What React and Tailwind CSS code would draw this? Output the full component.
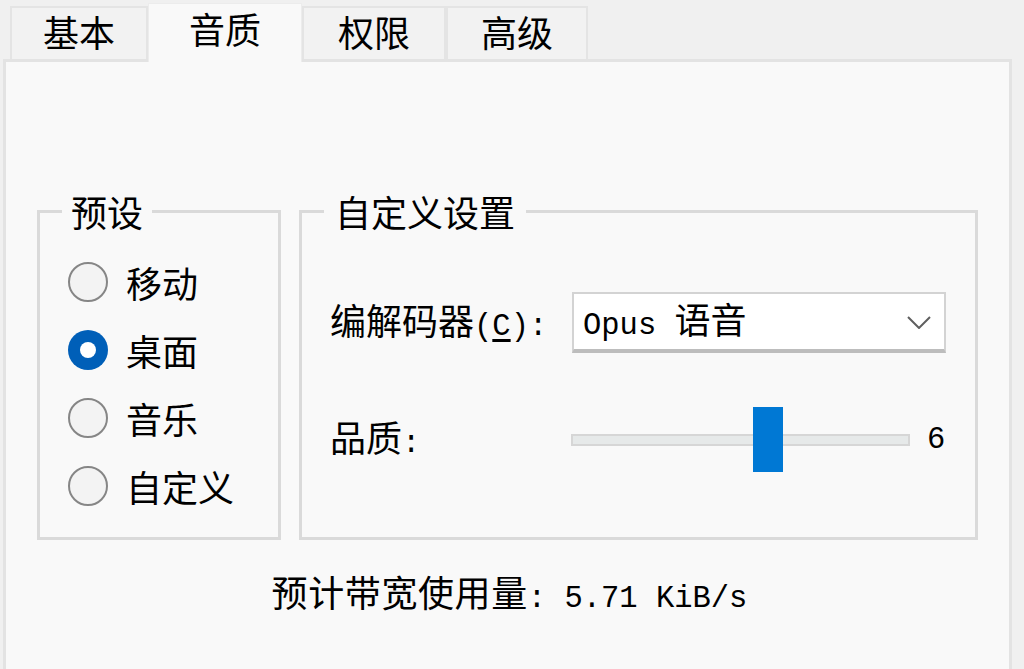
const cjk = "font-['Noto_Sans_CJK_SC',sans-serif]";
const mono = "font-['Liberation_Mono',monospace] text-[30.5px]";

function Tab({ label, selected, className }) {
  if (selected) {
    return (
      <div
        className={`relative z-10 -mb-[3px] flex h-[59px] items-start justify-center border-x border-t border-[#ececec] bg-[#f9f9f9] pt-[5px] ${className}`}
      >
        <span className="leading-[38px]">{label}</span>
      </div>
    );
  }
  return (
    <div
      className={`flex h-[53px] items-start justify-center border-x-2 border-t-2 border-[#e4e4e4] bg-[#f2f2f2] pt-[4px] ${className}`}
    >
      <span className="leading-[38px]">{label}</span>
    </div>
  );
}

function Radio({ label, checked }) {
  return (
    <div className="flex h-[68px] items-center gap-[18px]">
      {checked ? (
        <span className="flex h-[40px] w-[40px] items-center justify-center rounded-full bg-[#005fb8]">
          <span className="h-[16px] w-[16px] rounded-full bg-white" />
        </span>
      ) : (
        <span className="h-[40px] w-[40px] rounded-full border-2 border-[#868686] bg-[#f3f3f3]" />
      )}
      <span className="leading-[40px]">{label}</span>
    </div>
  );
}

export default function App() {
  const presets = [
    { label: "移动", checked: false },
    { label: "桌面", checked: true },
    { label: "音乐", checked: false },
    { label: "自定义", checked: false },
  ];

  return (
    <div className={`h-[669px] w-[1024px] overflow-hidden bg-[#f0f0f0] text-[36px] text-black ${cjk}`}>
      <div className="flex h-[59px] items-end pl-[10px]">
        <Tab label="基本" className="w-[138px]" />
        <Tab label="音质" selected className="w-[154px]" />
        <Tab label="权限" className="w-[144px]" />
        <Tab label="高级" className="w-[142px]" />
      </div>

      <div className="ml-[3px] h-[620px] w-[1009px] border-[3px] border-[#e3e3e3] bg-[#f9f9f9]">
        <div className="mt-[131px] flex gap-[18px] pl-[31px]">
          <fieldset className="h-[347px] w-[244px] border-[3px] border-[#dadada] pl-[28px]">
            <legend className="ml-[-6px] px-[9px] leading-[36px]">预设</legend>
            <div className="flex flex-col pt-[19px]">
              {presets.map((p) => (
                <Radio key={p.label} label={p.label} checked={p.checked} />
              ))}
            </div>
          </fieldset>

          <fieldset className="h-[347px] w-[679px] border-[3px] border-[#dadada] pl-[28px]">
            <legend className="ml-[-6px] px-[11px] leading-[36px]">自定义设置</legend>
            <div className="flex flex-col pt-[63px]">
              <div className="flex items-center">
                <span className="w-[242px] leading-[40px]">
                  编解码器<span className={mono}>
                    (<span className="underline underline-offset-4">C</span>):
                  </span>
                </span>
                <div className="flex h-[61px] w-[374px] items-center justify-between border-2 border-b-[4px] border-[#d3d3d3] border-b-[#bdbdbd] bg-white pl-[9px] pr-[13px]">
                  <span className="leading-[40px]">
                    <span className={mono}>Opus </span>语音
                  </span>
                  <svg width="24" height="13" viewBox="0 0 24 13" className="mt-[2px]">
                    <polyline points="1,1 12,12 23,1" fill="none" stroke="#5f5f5f" strokeWidth="2" />
                  </svg>
                </div>
              </div>

              <div className="mt-[54px] flex items-center">
                <span className="w-[241px] leading-[40px]">
                  品质<span className={mono}>:</span>
                </span>
                <div className="relative flex h-[65px] w-[339px] items-center">
                  <div className="h-[12px] w-full border-2 border-[#d6d6d6] bg-[#e6e9e9]" />
                  <div className="absolute left-[182px] top-0 h-[65px] w-[30px] bg-[#0078d4]" />
                </div>
                <span className={`ml-[17px] leading-[40px] ${mono}`}>6</span>
              </div>
            </div>
          </fieldset>
        </div>

        <div className="mt-[31px] flex justify-center pl-[4px]">
          <span className="leading-[40px]">
            <span className="tracking-[0.6px]">预计带宽使用量</span>
            <span className={mono}>: 5.71 KiB/s</span>
          </span>
        </div>
      </div>
    </div>
  );
}
